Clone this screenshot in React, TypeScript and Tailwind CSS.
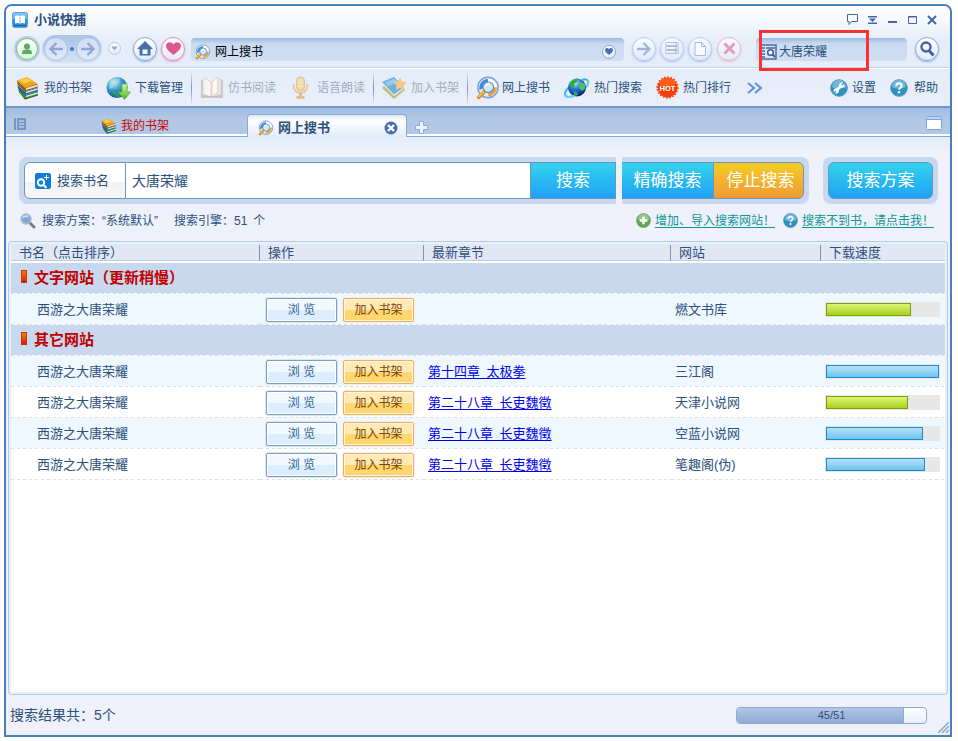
import React from "react"
import { clsx, type ClassValue } from "clsx"
import { twMerge } from "tailwind-merge"

type Book = {
  id: number
  title: string
  chapter?: string
  site: string
  speed: number
  color: "green" | "blue"
}

const groups: { name: string; books: Book[] }[] = [
  {
    name: "文字网站（更新稍慢）",
    books: [
      { id: 1, title: "西游之大唐荣耀", site: "燃文书库", speed: 75, color: "green" },
    ],
  },
  {
    name: "其它网站",
    books: [
      { id: 2, title: "西游之大唐荣耀", chapter: "第十四章\u2002太极拳", site: "三江阁", speed: 100, color: "blue" },
      { id: 3, title: "西游之大唐荣耀", chapter: "第二十八章\u2002长吏魏徵", site: "天津小说网", speed: 73, color: "green" },
      { id: 4, title: "西游之大唐荣耀", chapter: "第二十八章\u2002长吏魏徵", site: "空蓝小说网", speed: 86, color: "blue" },
      { id: 5, title: "西游之大唐荣耀", chapter: "第二十八章\u2002长吏魏徵", site: "笔趣阁(伪)", speed: 88, color: "blue" },
    ],
  },
]

function cn(...inputs: ClassValue[]) {
  return twMerge(clsx(inputs))
}

function BooksIcon({ size }: { size: number }) {
  return (
    <svg width={size} height={size} viewBox="0 0 24 24" className="shrink-0">
      <path d="M3 16 9 23.500 22 19.500V16L9 19 3 12Z" fill="#3b4033" />
      <path d="M2 13 9 19.500 22 15.500V19L9 22.500 3 16Z" fill="#2f9236" />
      <path d="M10 19.800 22 16.200V17.800L10 21.300Z" fill="#d9e3d5" />
      <path d="M1.500 9 9 15.500 22 11.500V15.500L9 19 2 12.500Z" fill="#1f66a3" />
      <path d="M10 15.800 22 12.200V13.800L10 17.300Z" fill="#dfe8ef" />
      <path d="M1 4.500 9 11.500 21 7.500 22 11.500 9 15.500 1.500 8.500Z" fill="#9c5a10" />
      <path d="M10 12 21.500 8.500V10.500L10 14Z" fill="#ede4cf" />
      <path d="M1 4.500 11 1 21 7.500 9 11.500Z" fill="#e9a815" />
      <path d="M3 4.500 11 1.800 16 5 8 7.800Z" fill="#f8cb45" />
    </svg>
  )
}

function DownloadGlobeIcon() {
  return (
    <svg width="25" height="24" viewBox="0 0 25 24" className="shrink-0">
      <defs>
        <radialGradient id="dlGlobe" cx="35%" cy="25%" r="80%">
          <stop offset="0" stopColor="#d8f4ff" />
          <stop offset=".45" stopColor="#3d9fd0" />
          <stop offset="1" stopColor="#0b4f7e" />
        </radialGradient>
        <linearGradient id="dlArrow" x2="0" y2="1">
          <stop offset="0" stopColor="#d5f7a5" />
          <stop offset="1" stopColor="#4fb321" />
        </linearGradient>
      </defs>
      <circle cx="11" cy="11.500" r="10.500" fill="url(#dlGlobe)" />
      <path d="M4 6c3-4 8-4 10-3l-2 4-4 1-1 4-4 1Z" fill="#a8dfd8" opacity=".6" />
      <path d="M8 14l6 1 1 5-4 2-3-4Z" fill="#2f9a74" opacity=".8" />
      <path d="M16 8h5v8h3.500L18.500 23.500 12.500 16H16Z" fill="url(#dlArrow)" stroke="#5cb536" strokeWidth=".8" />
    </svg>
  )
}

function OpenBookIcon() {
  return (
    <svg width="24" height="24" viewBox="0 0 24 24" className="shrink-0 opacity-70">
      <path d="M1 4h2v15h18V4h2v18H1Z" fill="#b9bec8" />
      <path d="M3 4l1-2 7 4v15l-8-3Z" fill="#fffaf4" stroke="#e0b9a0" strokeWidth=".8" />
      <path d="M12 6 18 1v15l-6 5Z" fill="#fffdfa" stroke="#e0b9a0" strokeWidth=".8" />
      <path d="M18 3h3v15l-9 3 6-5Z" fill="#f6e8dd" stroke="#e0b9a0" strokeWidth=".8" />
      <path d="M2 20.500h20" stroke="#c9a98f" />
    </svg>
  )
}

function MicIcon() {
  return (
    <svg width="17" height="24" viewBox="0 0 17 24" className="shrink-0 opacity-60">
      <rect x="4.500" y="1" width="8" height="14" rx="4" fill="#f5c96c" stroke="#dca544" />
      <path d="M6 4h5M6 7h5M6 10h5" stroke="#fff3d0" />
      <path d="M1.500 8c0 6 3 9 7 9s7-3 7-9" fill="none" stroke="#e5b356" strokeWidth="2" />
      <path d="M8.500 17v3M4.500 21.500h8" stroke="#dca544" strokeWidth="3" />
    </svg>
  )
}

function StarBookIcon() {
  return (
    <svg width="25" height="24" viewBox="0 0 25 24" className="shrink-0 opacity-75">
      <path d="M0 12l12 11 11-9-2-4L12 19 2 10Z" fill="#a9b457" />
      <path d="M2 9l10 11 9-7v-2L12 17 3 7Z" fill="#f3f6e9" />
      <path d="M0 6 12 1 22 11 12 18.500Z" fill="#4a9bd8" />
      <path d="M3 6.500 12 2.500 16 6 6 10.500Z" fill="#7dbfec" />
      <path d="m18 1 2 4.500 5 .600-3.500 3.400.800 4.500-4.300-2-4.300 2 .800-4.500L11 6.100l5-.600Z" fill="#f9bd62" />
    </svg>
  )
}

function LensIcon({ size }: { size: number }) {
  return (
    <svg width={size} height={size} viewBox="0 0 24 24" className="shrink-0">
      <circle cx="12" cy="11.500" r="10.200" fill="#dfeafa" stroke="#7d9fd6" strokeWidth="1.400" />
      <path d="M12 3a9 9 0 0 0-8.500 11l4-2a5 5 0 0 1 4.500-5Z" fill="#4d86d8" />
      <path d="M12 2.500a9 9 0 0 1 9 7.500l-4 1a5 5 0 0 0-5-4Z" fill="#fff" />
      <path d="M21 11.500a9 9 0 0 1-9 9l.5-4a5 5 0 0 0 4.600-5Z" fill="#f0a23c" />
      <circle cx="12.300" cy="11.300" r="5.300" fill="#c9ecff" stroke="#5d8dd0" strokeWidth="1.200" />
      <path d="M9.500 10.500a3 3 0 0 1 4-2.300" fill="none" stroke="#fff" strokeWidth="1.500" />
      <path d="M8 16 2.800 21.200" stroke="#d97d10" strokeWidth="3.600" strokeLinecap="round" />
      <path d="M7.500 16 3 20.500" stroke="#fbc04e" strokeWidth="1.800" strokeLinecap="round" />
    </svg>
  )
}

function OrbitGlobeIcon() {
  return (
    <svg width="26" height="24" viewBox="0 0 26 24" className="shrink-0">
      <defs>
        <radialGradient id="orbit" cx="40%" cy="25%" r="75%">
          <stop offset="0" stopColor="#bdf5ff" />
          <stop offset=".4" stopColor="#2f7fe0" />
          <stop offset="1" stopColor="#0a1a86" />
        </radialGradient>
      </defs>
      <path d="M5 11C-1 17 0 21 5 21s21-10 19-16c-.8-2-4-2-6-1" fill="none" stroke="#38b7ea" strokeWidth="2" />
      <circle cx="13" cy="11.500" r="9" fill="url(#orbit)" />
      <path d="M6 7c2-4 6-4.500 8-4l-1 3-3 2 1 3-4 1Z" fill="#2fae3c" />
      <path d="M16 6l5 2v5l-3 2-3-3Z" fill="#4cc653" />
      <path d="M9 15l4 1 1 3-3 1Z" fill="#2fae3c" />
      <path d="M1.500 18c0 4 5 3.500 9 1.500M22.500 11c2-3 2.500-5 1.500-6" fill="none" stroke="#62d6f6" strokeWidth="2" />
    </svg>
  )
}

function HotIcon() {
  return (
    <svg width="23" height="23" viewBox="0 0 23 23" className="shrink-0">
      <circle cx="11.500" cy="11.500" r="10" fill="#f4400f" />
      <circle cx="11.500" cy="11.500" r="10.300" fill="none" stroke="#ee4210" strokeWidth="1.600" strokeDasharray="1.600 1.600" />
      <ellipse cx="11.500" cy="7" rx="8" ry="5" fill="#ff6a1f" opacity=".7" />
      <text x="11.500" y="14.500" textAnchor="middle" fontSize="7.500" fontWeight="900" fill="#fff" fontFamily="Liberation Sans, sans-serif">HOT</text>
    </svg>
  )
}

function BallIcon({ size, kind }: { size: number; kind: "tool" | "help" | "add" }) {
  return (
    <svg width={size} height={size} viewBox="0 0 18 18" className="shrink-0">
      <circle cx="9" cy="9" r="8.300" fill={kind === "add" ? "#5fa64e" : "#2a92c4"} stroke={kind === "add" ? "#6f9c66" : "#5b93ad"} />
      <path d="M2 8a7 7 0 0 1 14 0c-4 2-10 2-14 0Z" fill="#fff" opacity=".35" />
      {kind === "tool" && (
        <>
          <path d="M6 12 12 6" stroke="#fff" strokeWidth="2.500" strokeLinecap="round" />
          <circle cx="11.800" cy="6.200" r="2.600" fill="#fff" />
          <circle cx="6.200" cy="11.800" r="2.600" fill="#fff" />
          <path d="m12 6 2.500-2.500M6 12l-2.500 2.500" stroke="#3a9fcd" strokeWidth="1.600" />
        </>
      )}
      {kind === "help" && (
        <>
          <path d="M6.300 7c0-3.500 5.400-3.500 5.400-.3 0 2-2.600 2-2.600 4" fill="none" stroke="#fff" strokeWidth="2" />
          <circle cx="9" cy="13.200" r="1.300" fill="#fff" />
        </>
      )}
      {kind === "add" && <path d="M9 4.500v9M4.500 9h9" stroke="#fff" strokeWidth="3" />}
    </svg>
  )
}

function RoundButton({ label, className, children }: { label: string; className?: string; children: React.ReactNode }) {
  return (
    <button
      aria-label={label}
      className={cn(
        "flex size-6 shrink-0 items-center justify-center rounded-full border bg-gradient-to-b from-white to-[#e3ebf9] shadow-[0_1px_2px_#8fabe4]",
        className
      )}
    >
      {children}
    </button>
  )
}

function ToolItem({ icon, text, disabled, className }: { icon: React.ReactNode; text: string; disabled?: boolean; className?: string }) {
  return (
    <button
      disabled={disabled}
      className={cn("flex shrink-0 items-center text-xs whitespace-nowrap", disabled && "text-[#9fafc2]", className)}
    >
      {icon}
      {text}
    </button>
  )
}

function Divider({ className }: { className?: string }) {
  return <span className={cn("h-8 w-px shrink-0 bg-gradient-to-b from-[#dbe5f3] via-[#7595c0] to-[#dbe5f3]", className)} />
}

function TitleBar() {
  return (
    <header className="flex h-7 items-center pr-3 pl-1.5">
      <svg width="16" height="16" viewBox="0 0 16 16">
        <rect x=".5" y=".5" width="15" height="15" rx="2" fill="#2f8fdc" stroke="#5c9fd8" />
        <rect x="1" y="1" width="14" height="6" rx="1" fill="#7cc3f2" />
        <path d="M3 4c2-1 4-.5 5 .5 1-1 3-1.500 5-.5v7.500c-2-1-4-.5-5 .5-1-1-3-1.500-5-.5Z" fill="#fff" />
        <path d="M8 5v6.500" stroke="#7fb4dd" />
        <path d="M2 13.500h12" stroke="#1d5f9e" />
      </svg>
      <h1 className="ml-1.5 text-[13px] font-bold">小说快捕</h1>
      <div className="ml-auto flex items-center gap-2 text-[#44689f]">
        <button aria-label="反馈">
          <svg width="12" height="12" viewBox="0 0 12 12" fill="none" stroke="currentColor">
            <path d="M1.500.5h10v7h-6l-2.500 3v-3h-1.500Z" />
          </svg>
        </button>
        <button aria-label="菜单">
          <svg width="12" height="12" viewBox="0 0 12 12" fill="currentColor">
            <path d="M2 2h9v1.500H2ZM3 4.500h7L6.500 8ZM2 8.500h9V10H2Z" />
          </svg>
        </button>
        <button aria-label="最小化">
          <svg width="12" height="12" viewBox="0 0 12 12" fill="currentColor">
            <path d="M2 7h9v2H2Z" />
          </svg>
        </button>
        <button aria-label="最大化">
          <svg width="12" height="12" viewBox="0 0 12 12" fill="none" stroke="currentColor">
            <path d="M2.500 2.500h8v7h-8ZM2 3h9" />
          </svg>
        </button>
        <button aria-label="关闭">
          <svg width="12" height="12" viewBox="0 0 12 12" stroke="currentColor" strokeWidth="2">
            <path d="M2 2l8 8M10 2l-8 8" />
          </svg>
        </button>
      </div>
    </header>
  )
}

function NavBar() {
  return (
    <nav className="flex h-[34px] items-center border-b border-[#c5d5ea] pr-[11px] pb-1 pl-2">
      <span className="flex size-[26px] shrink-0 items-center justify-center rounded-full bg-[#b9cde9]">
        <RoundButton label="账户" className="size-[22px] border-[#7cc57c] from-white to-[#dcf5d8] shadow-none">
          <svg width="12" height="12" viewBox="0 0 12 12" fill="#5fa968">
            <circle cx="6" cy="3.500" r="3" />
            <path d="M1 11c0-4 2-4.500 5-4.500s5 .5 5 4.500Z" />
          </svg>
        </RoundButton>
      </span>
      <div className="ml-0.5 flex h-7 shrink-0 items-center gap-0.5 rounded-full bg-gradient-to-b from-[#a9c2e4] to-[#d6e3f5] px-0.5">
        <RoundButton label="后退" className="border-[#a8bfe6] from-[#cfdef3] to-[#dfe9f8] shadow-none">
          <svg width="16" height="16" viewBox="0 0 16 16" fill="none" stroke="#8ea8d6" strokeWidth="2.400">
            <path d="M15 8H2.500M8.500 2l-6 6 6 6" />
          </svg>
        </RoundButton>
        <span className="size-1 rounded-full bg-[#4d76b8]" />
        <RoundButton label="前进" className="border-[#a8bfe6] from-[#cfdef3] to-[#dfe9f8] shadow-none">
          <svg width="16" height="16" viewBox="0 0 16 16" fill="none" stroke="#8ea8d6" strokeWidth="2.400">
            <path d="M1 8h12.500M7.500 2l6 6-6 6" />
          </svg>
        </RoundButton>
      </div>
      <RoundButton label="历史" className="ml-1.5 size-[13px] border-[#b4c9ec] shadow-none">
        <svg width="7" height="5" viewBox="0 0 7 5" fill="#8eabd9">
          <path d="M0 .5h7L3.500 4.500Z" />
        </svg>
      </RoundButton>
      <RoundButton label="主页" className="ml-3 border-[#8ea9dc]">
        <svg width="16" height="15" viewBox="0 0 16 15" fill="#4a6fae">
          <path d="M8 0 0 8h2.500v6.500h11V8H16Z" />
          <path d="M5.500 8.500h5v4.500h-5Z" fill="#f4f8ff" />
        </svg>
      </RoundButton>
      <RoundButton label="收藏" className="ml-1 border-[#e090b4] shadow-[0_1px_2px_#e79cbb]">
        <svg width="15" height="13" viewBox="0 0 15 13" fill="#de5890">
          <path d="M7.500 13C4 10 0 7.500 0 3.700 0 0 5.500-1.500 7.500 2.500 9.500-1.500 15 0 15 3.700 15 7.500 11 10 7.500 13Z" />
        </svg>
      </RoundButton>
      <div className="mt-0.5 ml-1.5 flex h-[23px] min-w-0 flex-1 items-center rounded bg-gradient-to-b from-[#9cb9df] via-[#cadaf0] via-25% to-[#d1dff3] pt-1 pr-2 pl-1">
        <LensIcon size={16} />
        <input
          aria-label="地址"
          defaultValue="网上搜书"
          className="ml-1 min-w-0 flex-1 bg-transparent text-xs text-black outline-none"
        />
        <RoundButton label="加入收藏" className="size-[14px] border-[#8ba8d8] shadow-none">
          <svg width="8" height="7" viewBox="0 0 15 13" fill="#4a6fae">
            <path d="M7.500 13C4 10 0 7.500 0 3.700 0 0 5.500-1.500 7.500 2.500 9.500-1.500 15 0 15 3.700 15 7.500 11 10 7.500 13Z" />
          </svg>
        </RoundButton>
      </div>
      <div className="ml-2 flex shrink-0 gap-1">
        <RoundButton label="转到" className="border-[#a3baea] opacity-70">
          <svg width="16" height="16" viewBox="0 0 16 16" fill="none" stroke="#859fcf" strokeWidth="2.400">
            <path d="M1 8h12.500M7.500 2l6 6-6 6" />
          </svg>
        </RoundButton>
        <RoundButton label="列表" className="border-[#a3baea] opacity-70">
          <svg width="14" height="13" viewBox="0 0 14 13" fill="none" stroke="#8fa8d6">
            <rect x=".5" y=".5" width="13" height="3" rx="1" />
            <rect x=".5" y="4.500" width="13" height="3" rx="1" />
            <rect x=".5" y="8.500" width="13" height="3" rx="1" />
            <path d="M10 2h2M10 6h2M10 10h2" />
          </svg>
        </RoundButton>
        <RoundButton label="新页" className="border-[#a3baea] opacity-70">
          <svg width="12" height="14" viewBox="0 0 12 14" fill="#fff" stroke="#8fa8d6">
            <path d="M1 .5h6.500l4 4v9H1ZM7.500.5v4h4" />
          </svg>
        </RoundButton>
        <RoundButton label="停止" className="ml-px border-[#e9a6c0] opacity-80 shadow-[0_1px_2px_#ecb2c8]">
          <svg width="13" height="13" viewBox="0 0 13 13" stroke="#dd8bab" strokeWidth="3">
            <path d="M1.500 1.500l10 10M11.500 1.500l-10 10" />
          </svg>
        </RoundButton>
      </div>
      <div className="relative mt-0.5 ml-[15px] flex h-[23px] w-[151px] shrink-0 items-center rounded bg-gradient-to-b from-[#9cb9df] via-[#cadaf0] via-25% to-[#d1dff3] pt-1 pl-1.5">
        <svg width="15" height="16" viewBox="0 0 15 16" className="shrink-0">
          <path d="M0 0h15v16H0Z" fill="#d9e5f6" />
          <path d="M0 1h14v14H0" fill="none" stroke="#4a6ba6" strokeWidth="1.500" />
          <path d="M0 4h3M0 7h3M0 10h3M0 13h3M4 4h9" stroke="#4a6ba6" strokeWidth="1.500" />
          <circle cx="8.500" cy="8.500" r="2.800" fill="#fff" stroke="#3f5f9d" strokeWidth="1.600" />
          <path d="m10.500 10.500 2.500 2.500" stroke="#3f5f9d" strokeWidth="2" />
        </svg>
        <input aria-label="快速搜索" defaultValue="大唐荣耀" className="ml-0.5 w-28 bg-transparent text-xs outline-none" />
        <span className="pointer-events-none absolute -top-2 left-[3px] h-[41px] w-[110px] border-3 border-[#fa3236]" />
      </div>
      <RoundButton label="搜索" className="ml-2 border-[#8ea9dc]">
        <svg width="16" height="16" viewBox="0 0 16 16" fill="none" stroke="#4463a6">
          <circle cx="7" cy="6" r="4.500" strokeWidth="2.400" />
          <path d="m10 9.500 4.500 5" strokeWidth="3" />
        </svg>
      </RoundButton>
    </nav>
  )
}

function ToolBar() {
  return (
    <div className="flex h-10 items-center border-t border-b-2 border-t-white border-b-[#6f97c8] bg-gradient-to-b from-[#e5edf8] to-[#e9eefa] pr-3 pl-2.5">
      <ToolItem icon={<BooksIcon size={24} />} text="我的书架" className="gap-1" />
      <ToolItem icon={<DownloadGlobeIcon />} text="下载管理" className="ml-3.5 gap-1" />
      <Divider className="ml-2" />
      <ToolItem icon={<OpenBookIcon />} text="仿书阅读" disabled className="ml-2 gap-1" />
      <ToolItem icon={<MicIcon />} text="语音朗读" disabled className="ml-4 gap-2" />
      <Divider className="ml-2" />
      <ToolItem icon={<StarBookIcon />} text="加入书架" disabled className="ml-2 gap-1" />
      <Divider className="ml-2" />
      <ToolItem icon={<LensIcon size={24} />} text="网上搜书" className="ml-2 gap-0.5" />
      <ToolItem icon={<OrbitGlobeIcon />} text="热门搜索" className="ml-3.5 gap-1" />
      <ToolItem icon={<HotIcon />} text="热门排行" className="ml-3.5 gap-1" />
      <button aria-label="更多" className="ml-4">
        <svg width="16" height="12" viewBox="0 0 16 12" fill="none" stroke="#5b8fd8" strokeWidth="2">
          <path d="m1 1 6 5-6 5M8 1l6 5-6 5" />
        </svg>
      </button>
      <ToolItem icon={<BallIcon size={18} kind="tool" />} text="设置" className="ml-auto gap-1" />
      <ToolItem icon={<BallIcon size={18} kind="help" />} text="帮助" className="ml-3.5 gap-1.5" />
    </div>
  )
}

function TabBar() {
  return (
    <div className="flex h-[29px] items-end border-b border-[#7fa5e6] bg-gradient-to-b from-[#9fbbde] via-[#b1c7e4] via-35% to-[#b2c8e5] text-xs">
      <div className="flex w-[241px] shrink-0 items-end self-stretch border-b-2 border-white pl-2">
        <button aria-label="标签列表" className="mb-1">
          <svg width="12" height="12" viewBox="0 0 12 12" fill="#7695c3">
            <path d="M0 0h2v12H0ZM3 0h9v12H3Z" />
            <path d="M5 3h5M5 6h5M5 9h5" stroke="#dce7f6" />
          </svg>
        </button>
        <button className="ml-[75px] flex h-4 items-center gap-1 text-[#d00000]">
          <BooksIcon size={16} />
          我的书架
        </button>
      </div>
      <div className="-mb-px flex h-[23px] w-40 shrink-0 items-center rounded-t border border-b-0 border-[#86a9de] bg-gradient-to-b from-[#dfe9f8] via-white via-30% to-[#e2eaf8] pt-1 pr-2 pl-2.5">
        <LensIcon size={16} />
        <button className="ml-1 text-[13px] font-bold">网上搜书</button>
        <button aria-label="关闭标签" className="ml-auto">
          <svg width="14" height="14" viewBox="0 0 14 14">
            <circle cx="7" cy="7" r="6.500" fill="#4a6eb0" />
            <path d="m4 4 6 6M10 4l-6 6" stroke="#fff" strokeWidth="2.400" />
          </svg>
        </button>
      </div>
      <div className="flex min-w-0 flex-1 items-end self-stretch border-b-2 border-white pr-2">
        <button aria-label="新建标签" className="ml-2">
          <svg width="13" height="13" viewBox="0 0 13 13">
            <path d="M4.500.5h4v4h4v4h-4v4h-4v-4h-4v-4h4Z" fill="#eef4ff" stroke="#8aa9e2" />
          </svg>
        </button>
        <button aria-label="窗口" className="mb-1 ml-auto">
          <svg width="16" height="14" viewBox="0 0 16 14">
            <rect x=".5" y=".5" width="15" height="13" rx="1" fill="#fff" stroke="#7fa3e0" />
            <path d="M1 3.500h14" stroke="#7fa3e0" />
            <path d="M1 2h14" stroke="#bcd2f4" strokeWidth="2" />
          </svg>
        </button>
      </div>
    </div>
  )
}

function SearchPanel() {
  const blue = "h-full border border-[#6d93c4] bg-gradient-to-b from-[#35d3ec] to-[#21a0f4] text-[17px] text-white"
  return (
    <section className="bg-gradient-to-b from-[#e1edf9] to-[#eef1fa] to-15% pt-5">
      <form className="flex pr-3 pl-[13px]" onSubmit={(e) => e.preventDefault()}>
        <div className="flex h-[47px] min-w-0 flex-1 rounded-l-lg bg-[#c8d8ee] py-[5px] pl-[5px]">
          <label
            htmlFor="keyword"
            className="flex w-[102px] shrink-0 items-center rounded-l-md border border-[#6f93c0] bg-gradient-to-b from-white from-55% via-[#f2f2f2] via-55% to-[#f8f8f8] pl-2.5 text-[13px]"
          >
            <svg width="16" height="16" viewBox="0 0 16 16" className="mr-1.5">
              <rect width="16" height="16" rx="2" fill="#0c7ddd" />
              <circle cx="6" cy="9.500" r="3.200" fill="none" stroke="#fff" strokeWidth="2" />
              <path d="m8.500 12 3 3" stroke="#fff" strokeWidth="2" />
              <path d="M11.500 2v5M9 4.500h5" stroke="#fff" />
            </svg>
            搜索书名
          </label>
          <input
            id="keyword"
            defaultValue="大唐荣耀"
            className="min-w-0 flex-1 border-y border-[#6f93c0] bg-white pl-1.5 text-sm outline-none"
          />
          <button className={cn(blue, "w-[86px] shrink-0")}>搜索</button>
        </div>
        <div className="ml-1.5 flex h-[47px] shrink-0 rounded-r-lg bg-[#c8d8ee] py-[5px] pr-[5px]">
          <button className={cn(blue, "w-[91px] border-x-0")}>精确搜索</button>
          <button className="w-[91px] rounded-r-md border border-[#6d93c4] bg-gradient-to-b from-[#f5cc1f] to-[#ef9a35] pl-1 text-[17px] text-white">
            停止搜索
          </button>
        </div>
        <div className="ml-3.5 h-[47px] shrink-0 rounded-lg bg-[#c8d8ee] p-[5px]">
          <button className={cn(blue, "w-[105px] rounded-md")}>搜索方案</button>
        </div>
      </form>
      <div className="flex h-[37px] items-center pr-4 pb-1 pl-3.5 text-xs">
        <svg width="16" height="16" viewBox="0 0 16 16" className="mr-1.5">
          <path d="m9.500 9.500 4.500 4.500" stroke="#777c85" strokeWidth="3" strokeLinecap="round" />
          <circle cx="6" cy="6" r="5" fill="#7fa9e0" stroke="#b5bac3" strokeWidth="1.500" />
          <path d="M3 5a3.500 3.500 0 0 1 5-1.500" fill="none" stroke="#d6e7fb" strokeWidth="1.500" />
        </svg>
        <span>搜索方案：“系统默认”</span>
        <span className="ml-4">搜索引擎：51&ensp;个</span>
        <a href="#add" className="ml-auto flex items-center gap-1 text-[#0e9698]">
          <BallIcon size={15} kind="add" />
          <span className="underline underline-offset-2">增加、导入搜索网站！</span>
        </a>
        <a href="#help" className="ml-2 flex items-center gap-1 text-[#0e9698]">
          <BallIcon size={15} kind="help" />
          <span className="underline underline-offset-2">搜索不到书，请点击我！</span>
        </a>
      </div>
    </section>
  )
}

function BookRow({ book, striped }: { book: Book; striped: boolean }) {
  return (
    <tr className={clsx(striped && "bg-[#eff7ff]")}>
      <td className="pl-[26px]">{book.title}</td>
      <td>
        <div className="flex gap-1.5 pl-1.5 text-xs">
          <button className="h-6 w-[71px] rounded-xs border border-[#7d9dc0] bg-gradient-to-b from-[#f1f8ff] from-50% to-[#dcedfe] to-50% text-[#2f6591] shadow-[inset_0_0_0_1px_white,0_0_0_1px_#dce7f2]">
            浏&nbsp;览
          </button>
          <button className="h-6 w-[71px] rounded-xs border border-[#e8b070] bg-gradient-to-b from-[#ffe9b5] from-50% to-[#ffd670] to-50% text-[#7a4304] shadow-[inset_0_0_0_1px_#fff6dc,0_0_0_1px_#fbeedd]">
            加入书架
          </button>
        </div>
      </td>
      <td className="pl-1">
        {book.chapter && (
          <a href={`#chapter-${book.id}`} className="text-[#0000ee] underline underline-offset-2">
            {book.chapter}
          </a>
        )}
      </td>
      <td className="pl-1">{book.site}</td>
      <td className="pr-[5px] pl-1">
        <div className="h-[15px] bg-[#e7e7e7] p-px">
          <div
            style={{ width: `${book.speed}%` }}
            className={clsx(
              "h-[13px] border bg-gradient-to-b",
              book.color === "green" ? "border-[#7d9c12] from-[#def472] to-[#a6d308]" : "border-[#1a8ecb] from-[#b5e1f8] to-[#6fc4f0]"
            )}
          />
        </div>
      </td>
    </tr>
  )
}

function ResultTable() {
  return (
    <main className="mx-0.5 flex-1 rounded border border-[#b0cce6] bg-[#e8f0fa] p-0.5">
      <div className="h-full bg-white">
        <table className="w-full table-fixed border-separate border-spacing-0 text-[13px] [&_td]:h-[31px] [&_td]:bg-[repeating-linear-gradient(90deg,#dcdcdc_0_3px,#fdfdfd_3px_6px)] [&_td]:bg-[length:100%_1px] [&_td]:bg-bottom [&_td]:bg-no-repeat">
          <colgroup>
            <col className="w-[249px]" />
            <col className="w-[164px]" />
            <col />
            <col className="w-[150px]" />
            <col className="w-[124px]" />
          </colgroup>
          <thead>
            <tr>
              {["书名（点击排序）", "操作", "最新章节", "网站", "下载速度"].map((name, i) => (
                <th
                  key={name}
                  className={clsx(
                    "h-[19px] border-b-2 border-white bg-[#e3e7f3] text-left leading-4 font-normal shadow-[inset_0_-1px_0_#bfcbdf]",
                    i === 0 ? "pl-2" : "pl-0"
                  )}
                >
                  <span className={clsx("block", i > 0 && "-ml-px border-l border-[#7d98bf] pl-2")}>{name}</span>
                </th>
              ))}
            </tr>
          </thead>
          {groups.map((group) => (
            <tbody key={group.name}>
              <tr className="bg-[#c8d8ee]">
                <td colSpan={5} className="pl-2.5 text-[15px] font-bold text-[#c00000]">
                  <span className="mr-[7px] inline-block h-[13px] w-1.5 border border-[#c03a10] bg-gradient-to-b from-[#ff7a00] to-[#d81000]" />
                  {group.name}
                </td>
              </tr>
              {group.books.map((book, i) => (
                <BookRow key={book.id} book={book} striped={i % 2 === 0} />
              ))}
            </tbody>
          ))}
        </table>
      </div>
    </main>
  )
}

function StatusBar() {
  return (
    <footer className="relative flex h-10 items-center justify-between pr-[23px] pl-1 text-sm">
      <span>搜索结果共：5个</span>
      <div className="relative flex h-[17px] w-[191px] overflow-hidden rounded-sm border border-[#8aa9de] bg-gradient-to-b from-white to-[#e9eef7]">
        <div
          style={{ width: `${(45 / 51) * 100}%` }}
          className="border-r border-[#8aa9de] bg-gradient-to-b from-[#b4c7e4] to-[#8faad4]"
        />
        <span className="absolute inset-0 text-center text-[11px] leading-[15px]">45/51</span>
      </div>
      <svg width="11" height="11" viewBox="0 0 11 11" className="absolute right-px bottom-0.5" stroke="#8ba4cf" strokeWidth="1.500">
        <path d="M0 11 11 0M4 11l7-7M8 11l3-3" />
      </svg>
    </footer>
  )
}

export default function App() {
  return (
    <div className="flex min-h-screen bg-white pt-1 pr-1.5 pb-1 pl-1 font-['Liberation_Sans','Noto_Sans_CJK_SC',sans-serif] text-[#2c507c]">
      <div className="flex min-w-0 flex-1 flex-col rounded-t-lg border-2 border-[#4a7dbd] bg-[#eef1fa]">
        <div className="rounded-t-md bg-gradient-to-b from-white to-[#e5edf9] to-60%">
          <TitleBar />
          <NavBar />
        </div>
        <ToolBar />
        <TabBar />
        <SearchPanel />
        <ResultTable />
        <StatusBar />
      </div>
    </div>
  )
}
